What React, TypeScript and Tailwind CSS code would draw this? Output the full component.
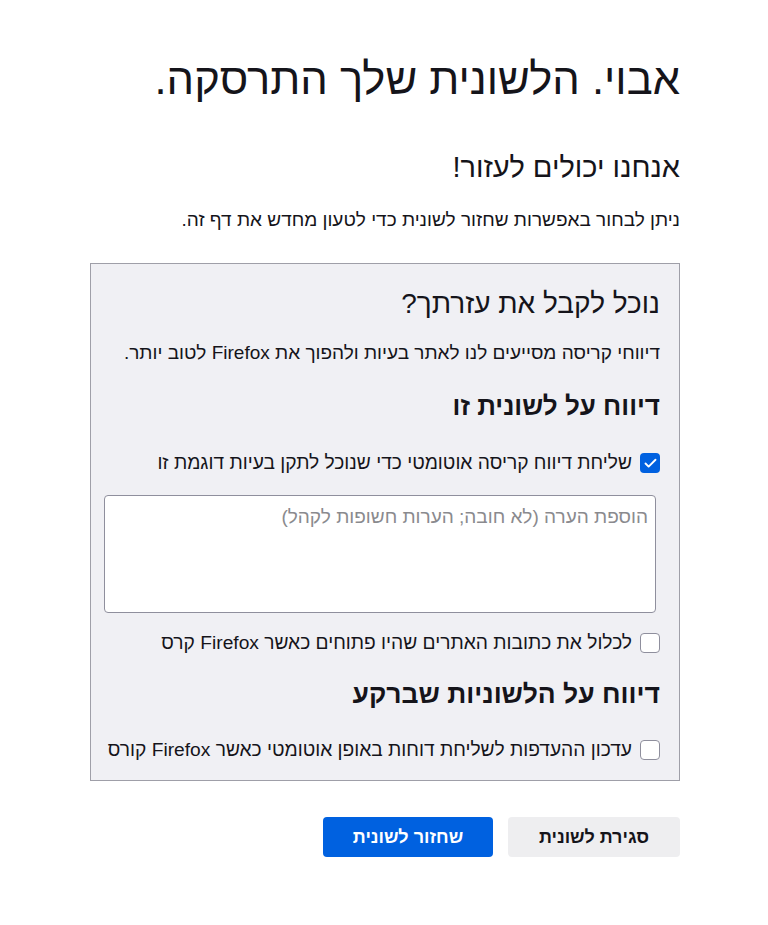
import { Check } from "lucide-react";

function Box({ checked, label }: { checked?: boolean; label: string }) {
  return (
    <label className="flex h-[24px] items-center gap-[8px] whitespace-nowrap text-[19.2px] leading-[24px]">
      {checked ? (
        <span className="flex h-[20px] w-[20px] shrink-0 items-center justify-center rounded-[4px] bg-[#0061e0]">
          <Check size={15} strokeWidth={3} color="white" />
        </span>
      ) : (
        <span className="h-[20px] w-[20px] shrink-0 rounded-[4px] border border-[#8f8f9d] bg-white" />
      )}
      <span>{label}</span>
    </label>
  );
}

export default function App() {
  return (
    <div
      dir="rtl"
      className="min-h-[925px] w-full bg-white text-[#15141a]"
      style={{ fontFamily: '"Liberation Sans", "DejaVu Sans", sans-serif' }}
    >
      <div className="ms-[88px] w-[590px] pt-[55px]">
        <h1 className="text-[43.5px] leading-[48px]">אבוי. הלשונית שלך התרסקה.</h1>

        <h2 className="mt-[46px] text-[29px] leading-[36px]">אנחנו יכולים לעזור!</h2>
        <p className="mt-[23px] text-[19px] leading-[24px]">
          ניתן לבחור באפשרות שחזור לשונית כדי לטעון מחדש את דף זה.
        </p>

        <div className="mt-[31px] border border-[#9f9fa8] bg-[#f0f0f4] px-[19px] pb-[18px] pt-[22px]">
          <h3 className="text-[28px] leading-[36px]">נוכל לקבל את עזרתך?</h3>
          <p className="mt-[19px] text-[19px] leading-[24px]">
            דיווחי קריסה מסייעים לנו לאתר בעיות ולהפוך את Firefox לטוב יותר.
          </p>

          <h3 className="mt-[25px] text-[26px] font-bold leading-[32px]">דיווח על לשונית זו</h3>
          <div className="mt-[29px]">
            <Box checked label="שליחת דיווח קריסה אוטומטי כדי שנוכל לתקן בעיות דוגמת זו" />
          </div>
          <textarea
            className="ms-[4px] mt-[20px] block h-[118px] w-[552px] resize-none rounded-[4px] border border-[#8f8f9d] bg-white pe-[8px] ps-[7px] pt-[9px] text-[19px] leading-[24px] outline-none placeholder:text-[#8a8a8e]"
            placeholder="הוספת הערה (לא חובה; הערות חשופות לקהל)"
          />
          <div className="mt-[18px]">
            <Box label="לכלול את כתובות האתרים שהיו פתוחים כאשר Firefox קרס" />
          </div>

          <h3 className="mt-[23px] text-[26.5px] font-bold leading-[32px]">דיווח על הלשוניות שברקע</h3>
          <div className="mt-[28px]">
            <Box label="עדכון ההעדפות לשליחת דוחות באופן אוטומטי כאשר Firefox קורס" />
          </div>
        </div>

        <div className="mt-[36px] flex gap-[15px]">
          <button className="h-[40px] w-[172px] rounded-[4px] bg-[#eeeef0] text-[18px] font-bold">
            סגירת לשונית
          </button>
          <button className="h-[40px] w-[170px] rounded-[4px] bg-[#0061e0] text-[18px] font-bold text-white">
            שחזור לשונית
          </button>
        </div>
      </div>
    </div>
  );
}
